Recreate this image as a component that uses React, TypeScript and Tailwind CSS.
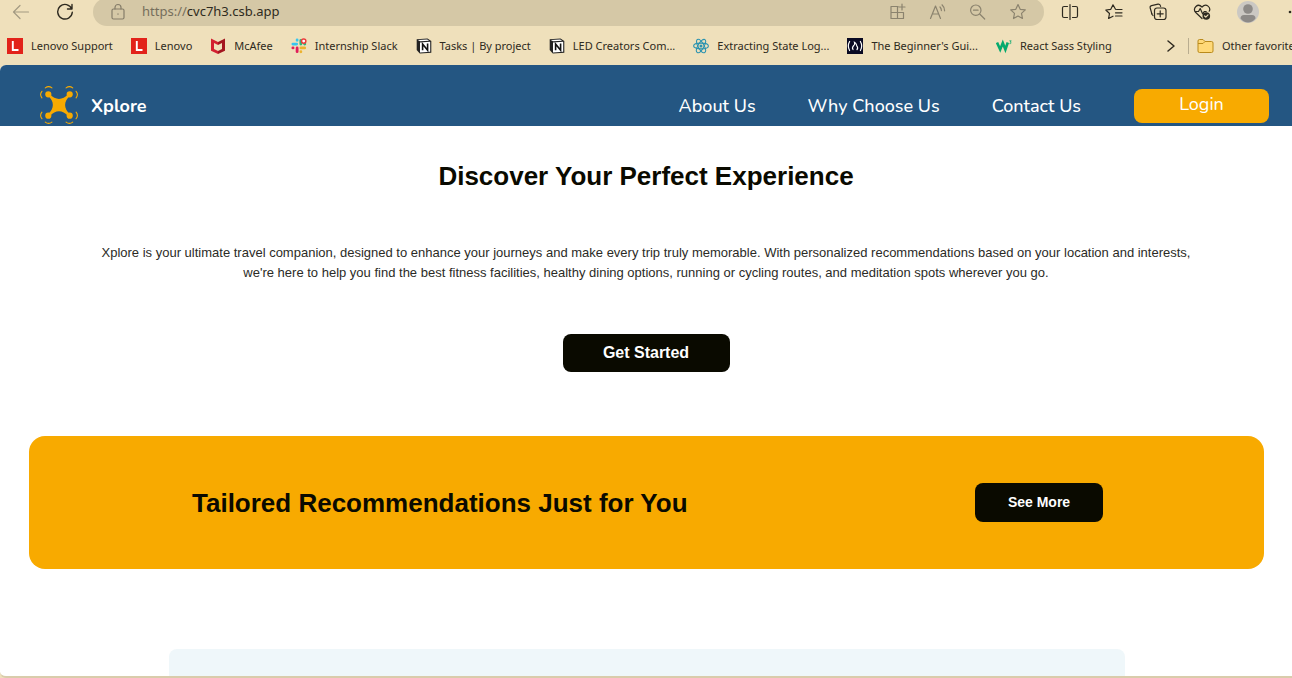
import type { ReactNode } from "react";

const stroke = {
  fill: "none",
  stroke: "currentColor",
  strokeWidth: 1.2,
  strokeLinecap: "round",
  strokeLinejoin: "round",
} as const;

function Icon({ children, size = 18 }: { children: ReactNode; size?: number }) {
  return (
    <svg width={size} height={size} viewBox="0 0 18 18" aria-hidden="true" {...stroke}>
      {children}
    </svg>
  );
}

const STAR = "M9 1.6l2.2 4.7 5.1.6-3.8 3.5 1 5.1L9 13l-4.5 2.5 1-5.1L1.7 6.9l5.1-.6z";

function Lenovo() {
  return (
    <svg width="16" height="16" viewBox="0 0 16 16" aria-hidden="true">
      <path d="M0 0h16v16H0z" fill="#e2231a" />
      <path d="M5.8 3v9H11.5" fill="none" stroke="#fff" strokeWidth="1.9" />
    </svg>
  );
}

function McAfee() {
  return (
    <svg width="16" height="16" viewBox="0 0 16 16" aria-hidden="true">
      <path d="M1 .5l7 3.6v2.900L4 5v6l4 1.900v3.100l-7-3.200z" fill="#d32030" />
      <path d="M15 .5L8 4.100v2.900L12 5v6l-4 1.900v3.100l7-3.200z" fill="#a3161f" />
    </svg>
  );
}

function Slack() {
  return (
    <svg width="16" height="16" viewBox="0 0 17 17" aria-hidden="true">
      <g fill="none" strokeWidth="3" strokeLinecap="round">
        <path d="M2 6.500h4M6.500 2v.5" stroke="#36c5f0" />
        <path d="M10.500 2.500v4M14.500 6.500h.2" stroke="#2eb67d" />
        <path d="M10.500 10.500h4M10.500 14.500v.2" stroke="#ecb22e" />
        <path d="M6.500 10.500v4M2 10.500h.2" stroke="#e01e5a" />
      </g>
      <circle cx="13.500" cy="3.300" r="2.300" fill="#fff" stroke="#ed3b3b" strokeWidth="1.600" />
    </svg>
  );
}

function Notion() {
  return (
    <svg width="16" height="16" viewBox="0 0 16 16" aria-hidden="true">
      <path d="M.7 1.200L11.500.5l3.800 2.600v11.700l-11.500.7-3.100-3.600z" fill="#222" />
      <path d="M1.800 2l9.400-.6 1.900 1.400-9 .5z" fill="#fff" />
      <path d="M4 4.400l10.200-.6v10l-10.200.6z" fill="#fff" />
      <path d="M6.600 12.300V6l5 6.200V5.600" fill="none" stroke="#111" strokeWidth="1.600" />
    </svg>
  );
}

function ReactLogo() {
  return (
    <svg width="16" height="16" viewBox="0 0 16 16" aria-hidden="true" fill="none" stroke="#2b93b0" strokeWidth="1.100">
      <ellipse cx="8" cy="8" rx="7.400" ry="2.900" />
      <ellipse cx="8" cy="8" rx="7.400" ry="2.900" transform="rotate(60 8 8)" />
      <ellipse cx="8" cy="8" rx="7.400" ry="2.900" transform="rotate(120 8 8)" />
      <circle cx="8" cy="8" r="1.500" fill="#2b93b0" stroke="none" />
    </svg>
  );
}

function CodeCamp() {
  return (
    <svg width="16" height="16" viewBox="0 0 16 16" aria-hidden="true">
      <path d="M0 0h16v16H0z" fill="#0a0a23" />
      <g fill="none" stroke="#fff" strokeWidth="1.200" strokeLinecap="round">
        <path d="M2.600 3.500c-1.600 2.800-1.600 6.200 0 9M13.400 3.500c1.600 2.800 1.600 6.200 0 9" />
        <path d="M6 11.500c-1.600-2 .2-3.200 1.200-4.500.6-.9.6-1.700.3-2.700 2 .9 1.800 2.600 2.300 3.500.9 1.200 1.400 2.400.2 3.700" />
      </g>
    </svg>
  );
}

function W3() {
  return (
    <svg width="16" height="16" viewBox="0 0 16 16" aria-hidden="true" fill="none" stroke="#04aa6d">
      <path d="M1 4.500l3.200 7 2.600-6.500 2.600 6.500 2.400-7" strokeWidth="2.600" />
      <path d="M13.400 2.800h1.800l-1 1.300c1.200.1 1.300 1.800-.8 1.600" strokeWidth=".8" />
    </svg>
  );
}

function Drone() {
  const arms = [0, 90, 180, 270];
  return (
    <svg width="38" height="40" viewBox="0 1 38 40" aria-hidden="true">
      <g fill="none" stroke="#f8aa00" strokeLinecap="round">
        {arms.map((angle) => (
          <g key={angle} transform={`rotate(${angle} 19 20)`}>
            <circle cx="8.300" cy="9.300" r="1.600" strokeWidth="3" />
            <path d="M5.300 2.900c1.900-1.500 4.700-1.500 6.600 0M1.900 6.300c-1.500 1.900-1.500 4.700 0 6.600" strokeWidth="1.100" />
          </g>
        ))}
      </g>
      <path d="M9.800 9C15.500 15.500 22.500 15.500 28.200 9L30 10.800C23.500 16.500 23.500 23.500 30 29.200L28.200 31C22.500 24.500 15.500 24.500 9.800 31L8 29.200C14.500 23.500 14.500 16.500 8 10.800Z" fill="#f8aa00" />
    </svg>
  );
}

const bookmarks = [
  { label: "Lenovo Support", icon: <Lenovo /> },
  { label: "Lenovo", icon: <Lenovo /> },
  { label: "McAfee", icon: <McAfee /> },
  { label: "Internship Slack", icon: <Slack /> },
  { label: "Tasks | By project", icon: <Notion /> },
  { label: "LED Creators Com...", icon: <Notion /> },
  { label: "Extracting State Log...", icon: <ReactLogo /> },
  { label: "The Beginner's Gui...", icon: <CodeCamp /> },
  { label: "React Sass Styling", icon: <W3 /> },
];

const addressActions = [
  {
    label: "Apps",
    icon: <path d="M9 3.500H2v12h12.500v-6H2M8.500 3.500v12M13 1v6M10 4h6" />,
  },
  {
    label: "Read aloud",
    icon: <path d="M1.500 15.500L6.500 3l5 12.500M3.200 11h6.600M11 4c1 1 1.400 2.300 1.400 3.600M13 1.800c1.700 1.600 2.600 3.600 2.600 6" />,
  },
  {
    label: "Zoom out",
    icon: <path d="M12 7.200a5.200 5.200 0 1 1-10.400 0 5.200 5.200 0 0 1 10.400 0M10.700 11l5 5M4.500 7.200h4.600" />,
  },
  { label: "Add to favorites", icon: <path d={STAR} /> },
];

const browserActions = [
  {
    label: "Split screen",
    icon: <path d="M6.500 3.500H3A1.500 1.500 0 0 0 1.500 5v8A1.500 1.500 0 0 0 3 14.500h3.500M11.500 3.500H15A1.500 1.500 0 0 1 16.500 5v8a1.500 1.500 0 0 1-1.500 1.500h-3.500M9 1.500v15" />,
  },
  {
    label: "Favorites",
    icon: <path d="M10.500 6.300L8 1.800 5.800 6.300l-5 .7 3.700 3.500-.9 5L8 13.200M11.500 6.500h5.500M10.500 9.800H17M10.500 13H17" />,
  },
  {
    label: "Collections",
    icon: (
      <>
        <path d="M2.900 10.800L1.200 5A2 2 0 0 1 2.600 2.600L9 1.200a2 2 0 0 1 2.400 1.500l.2.7" />
        <rect x="5.500" y="5" width="11.500" height="11.500" rx="2.500" />
        <path d="M11.200 7.800v6M8.200 10.800h6M4 12.500C3 12 2.700 11 2.500 10" />
      </>
    ),
  },
  {
    label: "Browser essentials",
    icon: (
      <>
        <path d="M9 15.500L2.500 9.300C-.5 5.500 4.500-.5 9 4c4.500-4.500 9.200.8 7.200 4.200M1.800 8.500h3.700l1.700-3 2.500 5.500 1.500-2.500h2" />
        <circle cx="13.300" cy="13" r="3.800" fill="currentColor" stroke="none" />
        <path d="M11.600 13l1.200 1.200 2.200-2.300" stroke="#efe0bb" />
      </>
    ),
  },
];

function BrowserChrome() {
  return (
    <div className="shrink-0 overflow-hidden bg-[#efe0bb] font-['Noto_Sans','Open_Sans',sans-serif] text-[#2e2a20]">
      <div className="flex h-[26px] items-end overflow-hidden">
        <div className="flex h-7 w-full shrink-0 items-center">
          <button aria-label="Back" className="flex w-[41px] shrink-0 justify-center text-[#a39a82]">
            <Icon><path d="M16.500 9H1.500M8 2.500L1.500 9 8 15.500" /></Icon>
          </button>
          <button aria-label="Refresh" className="flex w-12 shrink-0 justify-center">
            <Icon><path d="M15.800 6A7.300 7.300 0 1 0 16.300 9.300M16 1.500V6h-4.500" strokeWidth="1.400" /></Icon>
          </button>
          <div className="ml-1 flex h-7 min-w-0 flex-1 items-center rounded-full bg-[#d5c8a6] pr-1.5 pl-4">
            <span className="shrink-0 text-[#857d69]">
              <Icon>
                <rect x="3" y="6" width="12" height="10" rx="1.500" />
                <path d="M6 6V4.500a3 3 0 0 1 6 0V6M9 10.800v.4" />
              </Icon>
            </span>
            <p className="ml-[15px] min-w-0 flex-1 truncate text-[13px]">
              <span className="text-[#756e5c]">https://</span>cvc7h3.csb.app
            </p>
            {addressActions.map((action) => (
              <button key={action.label} aria-label={action.label} className="flex w-10 shrink-0 justify-center text-[#8b836e]">
                <Icon>{action.icon}</Icon>
              </button>
            ))}
          </div>
          <div className="ml-1 flex w-[244px] shrink-0 items-center overflow-hidden">
            {browserActions.map((action) => (
              <button key={action.label} aria-label={action.label} className="flex w-11 shrink-0 justify-center">
                <Icon>{action.icon}</Icon>
              </button>
            ))}
            <button aria-label="Profile" className="flex w-12 shrink-0 justify-center">
              <svg width="22" height="22" viewBox="0 0 22 22" aria-hidden="true">
                <circle cx="11" cy="11" r="11" fill="#cbc8c3" />
                <circle cx="11" cy="8" r="4.800" fill="#8d8a87" />
                <path d="M3.500 17.500q0-3.500 3.500-3.500h8q3.500 0 3.500 3.500-3 4-7.500 4t-7.500-4" fill="#8d8a87" />
              </svg>
            </button>
            <button aria-label="Settings and more" className="ml-4 shrink-0">
              <svg width="18" height="18" viewBox="0 0 18 18" fill="currentColor" aria-hidden="true">
                <circle cx="2" cy="9" r="1.300" /><circle cx="8" cy="9" r="1.300" /><circle cx="14" cy="9" r="1.300" />
              </svg>
            </button>
          </div>
        </div>
      </div>
      <div className="flex h-[39px] items-center justify-between pt-px pl-[7px] text-[11px] whitespace-nowrap">
        <nav aria-label="Favorites bar" className="flex shrink-0 items-center gap-[18px]">
          {bookmarks.map((bookmark) => (
            <a key={bookmark.label} href="#" className="flex items-center gap-2">
              {bookmark.icon}
              {bookmark.label}
            </a>
          ))}
        </nav>
        <div className="flex w-[130px] shrink-0 items-center overflow-hidden">
          <button aria-label="More favorites" className="flex w-[18px] shrink-0 justify-center">
            <svg width="10" height="14" viewBox="0 0 10 14" aria-hidden="true" {...stroke} strokeWidth="1.500">
              <path d="M2 2l6 5-6 5" />
            </svg>
          </button>
          <span className="ml-2 h-4 w-px shrink-0 bg-[#b9ad90]" />
          <a href="#" className="ml-2 flex shrink-0 items-center gap-2">
            <svg width="17" height="16" viewBox="0 0 17 16" aria-hidden="true">
              <path d="M1 3a1.500 1.500 0 0 1 1.500-1.500H6l2 2h6.500A1.500 1.500 0 0 1 16 5v8a1.500 1.500 0 0 1-1.500 1.500h-12A1.500 1.500 0 0 1 1 13z" fill="#ffd978" stroke="#b98a1b" />
              <path d="M1 5.500h5l2-2" fill="none" stroke="#b98a1b" />
            </svg>
            Other favorites
          </a>
        </div>
      </div>
    </div>
  );
}

export default function App() {
  return (
    <div className="flex h-screen flex-col overflow-hidden bg-[#efe0bb] font-['Liberation_Sans',Arial,sans-serif] text-[#0a0a00]">
      <BrowserChrome />
      <div className="flex min-h-0 flex-1 flex-col overflow-hidden rounded-l-md border-b-2 border-[#d9ccab] bg-white">
        <header className="flex shrink-0 items-end justify-between bg-[#245682] pt-[21px] pr-[23px] pl-10 font-[Nunito,'Noto_Sans',sans-serif] text-white">
          <a href="#" className="flex items-center gap-[13px] text-[18px] leading-10 font-bold">
            <Drone />
            Xplore
          </a>
          <div className="flex items-center gap-[53px]">
            <nav className="flex gap-[52px] text-[18px] leading-10 font-medium">
              <a href="#about">About Us</a>
              <a href="#why">Why Choose Us</a>
              <a href="#contact">Contact Us</a>
            </nav>
            <button className="h-[34px] w-[135px] rounded-lg bg-[#f8aa00] pb-1 text-[18px] leading-[30px]">Login</button>
          </div>
        </header>
        <main className="flex min-h-0 flex-1 flex-col overflow-hidden">
          <section className="flex shrink-0 flex-col items-center px-[100px] pt-[34px] text-center">
            <h1 className="text-[26px] leading-8 font-bold">Discover Your Perfect Experience</h1>
            <p className="mt-[51px] text-[13px] leading-5 text-[#2b2b26]">
              Xplore is your ultimate travel companion, designed to enhance your journeys and make every trip truly memorable. With personalized recommendations based on your location and interests, we're here to help you find the best fitness facilities, healthy dining options, running or cycling routes, and meditation spots wherever you go.
            </p>
            <button className="mt-[51px] h-[38px] w-[167px] rounded-lg bg-[#0a0a00] text-[16px] font-bold text-white">Get Started</button>
          </section>
          <section className="mt-16 mr-7 ml-[29px] flex h-[133px] shrink-0 items-center justify-between rounded-2xl bg-[#f8aa00] pr-[161px] pl-[163px]">
            <h2 className="text-[26px] leading-8 font-bold">Tailored Recommendations Just for You</h2>
            <button className="h-[39px] w-32 rounded-lg bg-[#0a0a00] text-[14px] font-bold text-white">See More</button>
          </section>
          <section className="mt-20 mr-[167px] ml-[169px] h-40 shrink-0 rounded-lg bg-[#eff7fa]" />
        </main>
      </div>
    </div>
  );
}
